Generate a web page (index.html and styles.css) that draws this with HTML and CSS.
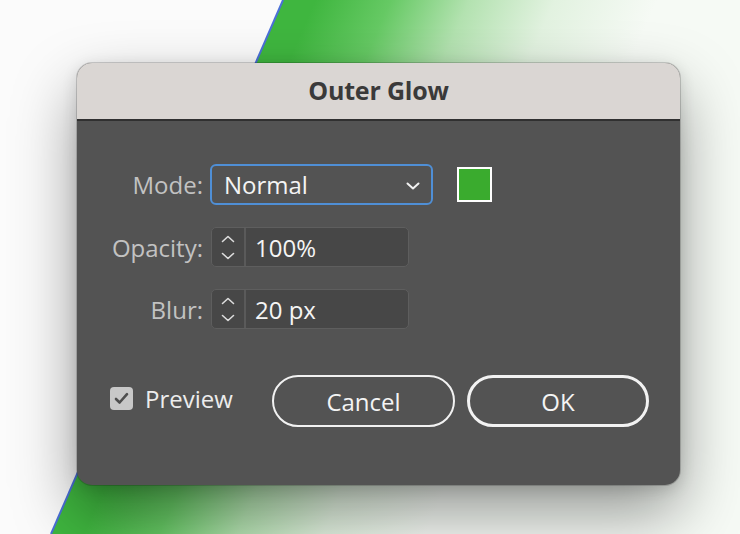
FILE: index.html
```html
<!DOCTYPE html>
<html lang="en">
<head>
<meta charset="utf-8">
<title>Outer Glow</title>
<link rel="stylesheet" href="styles.css">
</head>
<body>
<div class="desktop">
  <svg class="artwork" width="740" height="534" viewBox="0 0 740 534" aria-hidden="true">
    <defs>
      <linearGradient id="glow" gradientUnits="userSpaceOnUse" x1="272" y1="100" x2="560" y2="225">
        <stop offset="0" stop-color="#3fb63f"/>
        <stop offset="0.22" stop-color="#66c964"/>
        <stop offset="0.45" stop-color="#b3e2b0"/>
        <stop offset="0.7" stop-color="#e2f2e0"/>
        <stop offset="1" stop-color="#f6faf5"/>
      </linearGradient>
    </defs>
    <polygon points="283,0 740,0 740,534 51,534" fill="url(#glow)"/>
    <line x1="283" y1="0" x2="51" y2="534" stroke="#4b70d8" stroke-width="2"/>
  </svg>

  <div class="dialog">
    <div class="titlebar">Outer Glow</div>
    <div class="body">
      <div class="form">
        <label class="label">Mode:</label>
        <div class="control">
          <div class="select">
            <span>Normal</span>
            <svg class="chev" width="14" height="8" viewBox="0 0 14 8"><path d="M1.5 1.5 L7 6.5 L12.5 1.5" fill="none" stroke="#f2f2f2" stroke-width="2" stroke-linecap="round" stroke-linejoin="round"/></svg>
          </div>
          <div class="swatch"></div>
        </div>

        <label class="label">Opacity:</label>
        <div class="control">
          <div class="field">
            <div class="spinner">
              <svg width="14" height="8" viewBox="0 0 14 8"><path d="M1.5 6.5 L7 1.5 L12.5 6.5" fill="none" stroke="#dcdcdc" stroke-width="1.6" stroke-linecap="round" stroke-linejoin="round"/></svg>
              <svg width="14" height="8" viewBox="0 0 14 8"><path d="M1.5 1.5 L7 6.5 L12.5 1.5" fill="none" stroke="#dcdcdc" stroke-width="1.6" stroke-linecap="round" stroke-linejoin="round"/></svg>
            </div>
            <span class="value">100%</span>
          </div>
        </div>

        <label class="label">Blur:</label>
        <div class="control">
          <div class="field">
            <div class="spinner">
              <svg width="14" height="8" viewBox="0 0 14 8"><path d="M1.5 6.5 L7 1.5 L12.5 6.5" fill="none" stroke="#dcdcdc" stroke-width="1.6" stroke-linecap="round" stroke-linejoin="round"/></svg>
              <svg width="14" height="8" viewBox="0 0 14 8"><path d="M1.5 1.5 L7 6.5 L12.5 1.5" fill="none" stroke="#dcdcdc" stroke-width="1.6" stroke-linecap="round" stroke-linejoin="round"/></svg>
            </div>
            <span class="value">20 px</span>
          </div>
        </div>
      </div>

      <div class="actions">
        <div class="check">
          <span class="box">
            <svg width="15" height="13" viewBox="0 0 15 13"><path d="M2 7 L5.6 10.5 L13 2.2" fill="none" stroke="#4e4e4e" stroke-width="2.6" stroke-linecap="round" stroke-linejoin="round"/></svg>
          </span>
          <span class="check-label">Preview</span>
        </div>
        <button class="btn">Cancel</button>
        <button class="btn primary">OK</button>
      </div>
    </div>
  </div>
</div>
</body>
</html>
```

FILE: styles.css
```css
* { box-sizing: border-box; }

html, body {
  margin: 0;
  padding: 0;
  background: #fbfbfb;
}

.desktop {
  position: relative;
  width: 740px;
  height: 534px;
  overflow: hidden;
  padding: 63px 0 0 77px;
  font-family: "Open Sans", "Liberation Sans", sans-serif;
}

.artwork {
  position: absolute;
  left: 0;
  top: 0;
}

.dialog {
  position: relative;
  width: 603px;
  height: 422px;
  border-radius: 15px;
  overflow: hidden;
  background: #535353;
  box-shadow: 0 0 0 1px rgba(0, 0, 0, 0.16), 0 28px 64px rgba(0, 0, 0, 0.4), 0 4px 16px rgba(0, 0, 0, 0.14);
  display: flex;
  flex-direction: column;
}

.titlebar {
  height: 58px;
  flex: none;
  background: #dad6d3;
  border-bottom: 2px solid #303030;
  display: flex;
  align-items: center;
  justify-content: center;
  padding-bottom: 2px;
  font-size: 25px;
  font-weight: 700;
  color: #3a3a3a;
  letter-spacing: -0.2px;
}

.body {
  flex: 1;
  padding-top: 43px;
}

.form {
  display: grid;
  grid-template-columns: 126px auto;
  column-gap: 7px;
  row-gap: 22px;
  align-items: center;
}

.label {
  text-align: right;
  font-size: 24px;
  font-weight: 500;
  color: #c2c2c2;
}

.control {
  display: flex;
  align-items: center;
}

.select {
  width: 223px;
  height: 41px;
  border: 2px solid #4f8fd6;
  border-radius: 6px;
  display: flex;
  align-items: center;
  justify-content: space-between;
  padding: 0 11px 0 12px;
  font-size: 24px;
  font-weight: 500;
  color: #f4f4f4;
}

.chev { margin-top: 2px; }

.swatch {
  margin-left: 24px;
  width: 35px;
  height: 35px;
  background: #3aab2e;
  border: 2px solid #ffffff;
}

.field {
  margin-left: 1px;
  width: 198px;
  height: 40px;
  border: 1px solid #5e5e5e;
  border-radius: 5px;
  background: #474747;
  display: flex;
  align-items: center;
}

.spinner {
  width: 34px;
  height: 100%;
  border-right: 2px solid #5a5a5a;
  display: flex;
  flex-direction: column;
  align-items: center;
  justify-content: center;
  gap: 9px;
}

.value {
  margin-left: 9px;
  font-size: 24px;
  font-weight: 500;
  color: #f4f4f4;
}

.actions {
  margin-top: 46px;
  height: 52px;
  display: flex;
  align-items: center;
  padding-left: 33px;
}

.check {
  display: flex;
  align-items: center;
  gap: 12px;
  width: 162px;
  margin-top: -6px;
}

.box {
  width: 23px;
  height: 23px;
  border-radius: 4px;
  background: #c8c8c8;
  display: flex;
  align-items: center;
  justify-content: center;
}

.check-label {
  font-size: 24px;
  font-weight: 500;
  color: #ececec;
}

.btn {
  width: 183px;
  height: 52px;
  border-radius: 26px;
  border: 2px solid #f2f2f2;
  background: transparent;
  color: #f4f4f4;
  font-family: "Open Sans", "Liberation Sans", sans-serif;
  font-size: 24px;
  font-weight: 500;
  padding: 0;
  margin-right: 12px;
}

.btn.primary {
  width: 182px;
  border-width: 3px;
}
```
